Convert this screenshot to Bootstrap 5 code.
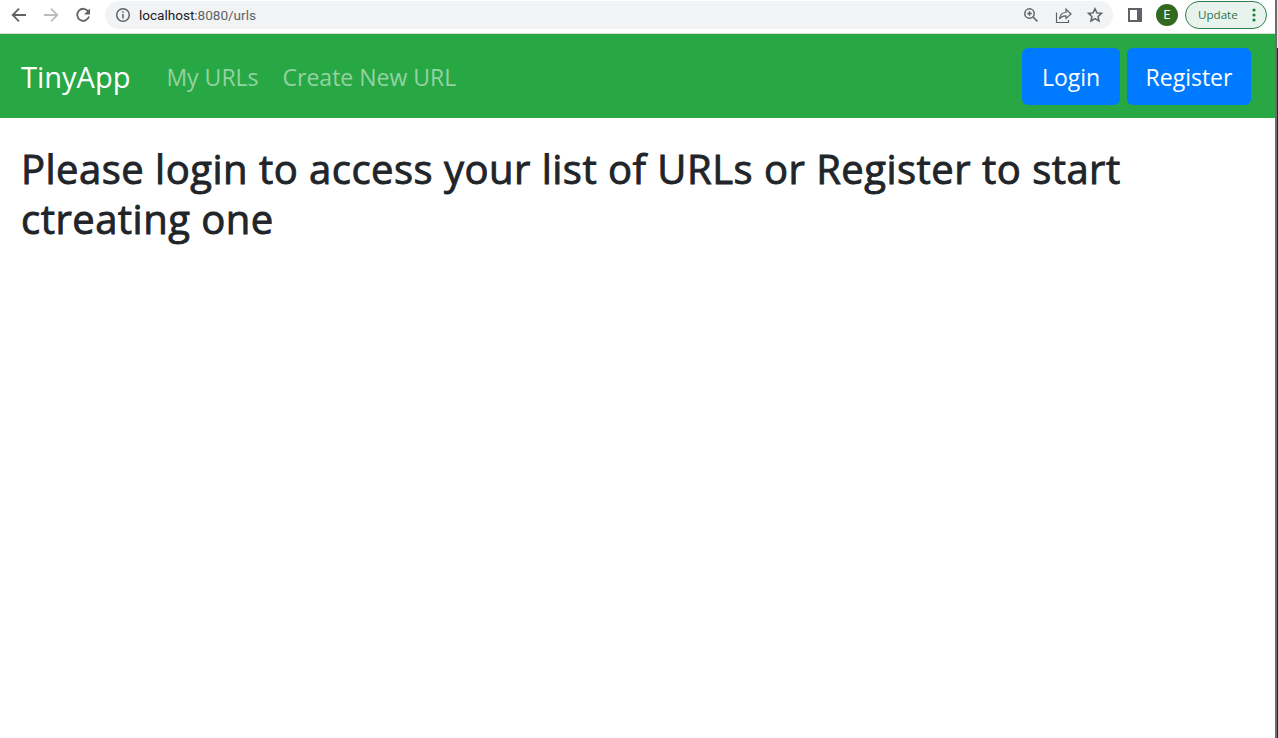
<!DOCTYPE html>
<html lang="en">
<head>
<meta charset="utf-8">
<title>TinyApp</title>
<link href="https://cdn.jsdelivr.net/npm/bootstrap@5.3.0/dist/css/bootstrap.min.css" rel="stylesheet">
<style>
html,body{height:100%;overflow:hidden}
body{font-family:"Open Sans","Noto Sans",sans-serif;color:#212529;background:#fff}
.window-edge{width:3px;background:linear-gradient(to right,#6c6c6c 2px,transparent 2px),linear-gradient(#e4e4e4 48px,#262626 48px)}
.toolbar{height:34px;padding-bottom:4px;border-bottom:1px solid #d5dbd6;color:#5f6368}
.toolbar svg{display:block;flex:none}
.address{height:28px;width:1008px;margin-left:14px;background:#f1f3f4;font:13.6px Roboto,sans-serif;padding:0 8px 0 10px}
.address .url{margin-left:8px;letter-spacing:-.03px}
.host{color:#202124}
.side-panel{margin-left:15px}
.avatar{width:22px;height:22px;margin-left:14px;background:#33691e;color:#fff;font:12px Roboto,sans-serif}
.update{width:82px;height:28px;margin-left:7px;border:1px solid #2d8049;background:#e9f3ed;color:#2d7048;font:11.6px "Open Sans",sans-serif;padding:0 9px 0 12px}
.app-nav{height:84px;background:#28a745;padding:0 24px 0 21px}
.app-nav .navbar-brand{font-size:29px;line-height:45px;color:#fff;margin-right:36px;padding:1px 0 0}
.app-nav .navbar-nav .nav-link{font-size:23px;line-height:36px;color:rgba(255,255,255,.5);padding:2px 0 0}
.btn-app{background:#007bff;color:#fff;font-size:23px;line-height:36px;height:57px;border:0;border-radius:6px;padding:2px 0 0}
.btn-login{width:98px}.btn-register{width:124px}
.prompt{font-size:40px;line-height:50px;font-weight:400;letter-spacing:.48px;-webkit-text-stroke:.9px #212529;padding:26px 21px 0;margin:0}
.prompt span{display:block;white-space:nowrap}
</style>
</head>
<body class="d-flex">
<div class="flex-grow-1 d-flex flex-column">
<header class="toolbar d-flex align-items-center">
<svg width="91" height="30" viewBox="0 0 91 30" fill="none" stroke-width="1.8"><path d="M26 15H13M19 8.7 12.7 15l6.3 6.3" stroke="#5f6368"/><path d="M44 15h13M51 8.7l6.300 6.300-6.300 6.300" stroke="#babcbe"/><path d="M88.300 11.500A6 6 0 1 0 89 16.500" stroke="#5f6368"/><path d="M90 8.500v6h-6z" fill="#5f6368"/></svg>
<div class="address rounded-pill d-flex align-items-center">
<svg width="16" height="16" viewBox="0 0 16 16" fill="none" stroke="#5f6368" stroke-width="1.5"><circle cx="8" cy="8" r="6.300"/><path d="M8 7v4.500M8 4.300v1.500"/></svg>
<span class="url"><span class="host">localhost</span>:8080/urls</span>
<svg class="ms-auto" width="84" height="18" viewBox="0 0 84 18" fill="none" stroke="#5f6368" stroke-width="1.500"><circle cx="8.500" cy="7.500" r="4.700"/><path d="m12 11 4.400 4.400M6.200 7.500h4.600M8.500 5.200v4.600"/><path d="M35.500 6.500v10h12V14M38.500 13c.5-4 3-6.500 6.500-6.500V3.200l5 4.800-5 4.500V9.800c-3 0-5 .7-6.500 3.200z" stroke-width="1.200"/><path d="m74 2.700 1.900 4.200 4.600.5-3.400 3.100.9 4.500-4-2.300-4 2.300.9-4.500-3.400-3.100 4.600-.5z" stroke-width="1.500"/></svg>
</div>
<svg class="side-panel" width="14" height="14" viewBox="0 0 14 14"><path d="M0 0h14v14H0zM2 2v10h7V2z" fill="#5f6368" fill-rule="evenodd"/></svg>
<span class="avatar rounded-circle d-flex align-items-center justify-content-center">E</span>
<span class="update rounded-pill d-flex align-items-center justify-content-between"><span>Update</span><svg width="6" height="16" viewBox="0 0 6 16" fill="#188038"><circle cx="3" cy="3" r="1.600"/><circle cx="3" cy="8" r="1.600"/><circle cx="3" cy="13" r="1.600"/></svg></span>
</header>
<nav class="navbar navbar-expand app-nav">
<a class="navbar-brand" href="#">TinyApp</a>
<div class="navbar-nav gap-4"><a class="nav-link" href="#">My URLs</a><a class="nav-link" href="#">Create New URL</a></div>
<div class="ms-auto d-flex" style="gap:7px"><button class="btn btn-app btn-login">Login</button><button class="btn btn-app btn-register">Register</button></div>
</nav>
<main><h1 class="prompt"><span>Please login to access your list of URLs or Register to start</span><span>ctreating one</span></h1></main>
</div>
<div class="window-edge"></div>
<script src="https://cdn.jsdelivr.net/npm/bootstrap@5.3.0/dist/js/bootstrap.bundle.min.js"></script>
</body>
</html>
